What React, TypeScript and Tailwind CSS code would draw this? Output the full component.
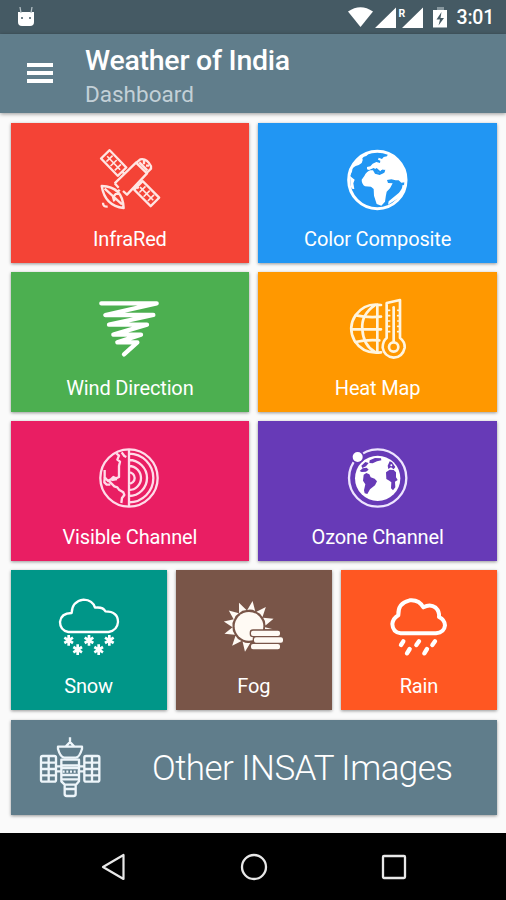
import type { ReactNode } from 'react';

interface TileProps {
  label: string;
  color: string;
  children: ReactNode;
}

export default function App() {
  return (
    <div className="w-full h-[900px] flex flex-col bg-[#fafafa] text-white font-[Roboto,sans-serif] overflow-hidden">
      <StatusBar />

      {/* Toolbar */}
      <header className="h-[79px] shrink-0 bg-[#607d8b] flex shadow-[0_1px_4px_rgba(0,0,0,0.4)]">
        <button className="w-[85px] pl-[27px] pt-[29px] flex flex-col gap-[4.5px]" aria-label="Menu">
          <span className="w-[26px] h-[3.5px] bg-white" />
          <span className="w-[26px] h-[3.5px] bg-white" />
          <span className="w-[26px] h-[3.5px] bg-white" />
        </button>
        <div className="pt-[10px]">
          <h1 className="text-[28.5px] leading-[34px] font-medium tracking-[-0.25px]">Weather of India</h1>
          <p className="text-[22.5px] leading-[32px] text-[#c3d0d7]">Dashboard</p>
        </div>
      </header>

      {/* Dashboard tiles */}
      <main className="flex-1 flex flex-col gap-[9px] pt-[10px] pl-[10.5px] pr-[9px]">
        <div className="grid grid-cols-2 gap-[9px]">
          <Tile label="InfraRed" color="bg-[#f44336]"><SatelliteIcon /></Tile>
          <Tile label="Color Composite" color="bg-[#2196f3]"><EarthIcon /></Tile>
          <Tile label="Wind Direction" color="bg-[#4caf50]"><TornadoIcon /></Tile>
          <Tile label="Heat Map" color="bg-[#ff9800]"><HeatIcon /></Tile>
          <Tile label="Visible Channel" color="bg-[#e91e63]"><CoreIcon /></Tile>
          <Tile label="Ozone Channel" color="bg-[#673ab7]"><OzoneIcon /></Tile>
        </div>
        <div className="grid grid-cols-3 gap-[9px] pb-[0.5px]">
          <Tile label="Snow" color="bg-[#009688]"><SnowIcon /></Tile>
          <Tile label="Fog" color="bg-[#795548]"><FogIcon /></Tile>
          <Tile label="Rain" color="bg-[#ff5722]"><RainIcon /></Tile>
        </div>
        <div className="h-[95px] flex items-center bg-[#607d8b] pl-[29.5px] shadow-[0_1px_3px_rgba(0,0,0,0.4)]">
          <InsatIcon />
          <span className="ml-[52px] pt-[4px] text-[35px] font-light tracking-[-0.55px] whitespace-nowrap">Other INSAT Images</span>
        </div>
      </main>

      <NavBar />
    </div>
  );
}

function Tile({ label, color, children }: TileProps) {
  return (
    <div className={`h-[140px] flex flex-col items-center pt-[27px] shadow-[0_1px_3px_rgba(0,0,0,0.4)] ${color}`}>
      {children}
      <span className="mt-[17px] text-[20px] leading-[24px] tracking-[-0.15px] whitespace-nowrap">{label}</span>
    </div>
  );
}

function StatusBar() {
  return (
    <div className="h-[34px] shrink-0 bg-[#455a64] flex items-center justify-between pl-[17px] pr-[12px]">
      <svg width="18" height="22" viewBox="0 0 18 22" fill="#fff">
        <path d="M1 6h16v10q0 4-4 4H5q-4 0-4-4z" />
        <path d="M4 7L3 1M14 7l1-6" stroke="#b4c0c5" strokeWidth="1.3" />
        <circle cx="5" cy="12" r="1" fill="#455a64" />
        <circle cx="13" cy="12" r="1" fill="#455a64" />
      </svg>
      <div className="flex items-center">
        <svg width="110" height="34" viewBox="347 0 110 34" fill="#fff">
          <path d="M348 11.5Q360.5 3 373 11.5L360.5 27z" />
          <path d="M396 7.5V28H375zM423 7.5V28H402z" />
          <text x="398.5" y="16.5" fontSize="10.5" fontWeight="700">R</text>
          <path d="M437 7h7v4h-7z" fill="#87979e" />
          <path d="M433 10h14v17.5h-14z" />
          <path d="M441.5 12l-5 7.5h3.5l-1.5 6 5.5-7.5h-3.5z" fill="#455a64" />
        </svg>
        <span className="pt-[2px] text-[19.5px] font-medium leading-none tracking-[-0.25px]">3:01</span>
      </div>
    </div>
  );
}

function NavBar() {
  return (
    <nav className="h-[67px] shrink-0 bg-black pl-[100px] pr-[98px] flex items-center justify-between">
      <svg width="28" height="30" viewBox="0 0 28 30" fill="none" stroke="#e8e8e8" strokeWidth="2.2" strokeLinejoin="round">
        <path d="M23.5 3v24L3 15z" />
      </svg>
      <svg width="30" height="30" viewBox="0 0 30 30" fill="none" stroke="#e8e8e8" strokeWidth="2.3">
        <circle cx="15" cy="15" r="12" />
      </svg>
      <svg width="28" height="30" viewBox="0 0 28 30" fill="none" stroke="#e8e8e8" strokeWidth="2.3">
        <rect x="3" y="4" width="22" height="22" rx="1" />
      </svg>
    </nav>
  );
}

function SatelliteIcon() {
  return (
    <svg className="overflow-visible" width="60" height="60" viewBox="30 30 180 180" fill="none" stroke="#ffe6e3" strokeWidth="7" strokeLinejoin="round">
      <g transform="translate(71 69) rotate(46)">
        <rect x="-36" y="-18" width="72" height="36" />
        <path d="M-28 0H28M-18-13V13M0-13V13M18-13V13" strokeWidth="5" />
      </g>
      <g transform="translate(170 161) rotate(45)">
        <rect x="-35" y="-18" width="70" height="36" />
        <path d="M-28 0H28M-18-13V13M0-13V13M18-13V13" strokeWidth="5" />
      </g>
      <path d="M74 130L138 68L171 100L111 164L99 153M74 130L86 143" />
      <path d="M138 69L151 58Q171 54 183 79L183 86L170 99M148 67L172 91M162 60V73M177 77H168" />
      <path d="M95 94L105 102M135 136L146 145" />
      <path d="M35 138Q98 140 101 204Q45 198 35 138zM44 146L96 193M89 149L69 171L73 184M80 158L91 164M39 188Q39 201 53 200" />
    </svg>
  );
}

function EarthIcon() {
  return (
    <svg className="overflow-visible" width="60" height="60" viewBox="31 30 180 180" fill="#fff">
      <circle cx="119" cy="120" r="86" fill="none" stroke="#fff" strokeWidth="9" />
      <path d="M35 110Q35 67 75 44L91 38Q93 44 86 48Q77 49 74 55Q78 61 72 69Q63 77 54 78L44 85Q45 94 40 101z" />
      <path d="M105 71L116 66L127 69L128 62L121 59L123 53L133 57L138 51L148 49L151 42L166 47Q204 71 206 117L202 127L191 128L183 121H174L161 118L148 120L151 129L165 130L157 145L147 155Q144 168 142 185L131 197L117 192L109 167L108 147L100 140L82 139Q72 132 72 119L80 108Q87 94 98 91L106 91L112 101L126 105L140 98L143 89L130 91L128 97L121 98L118 90L108 84L94 90L88 88V81L98 79z" />
      <path d="M111 88L117 84L128 94L136 88L141 94L132 101L122 98z" fill="#2196f3" />
      <path d="M37 108L51 119L47 130L50 147Q41 148 39 137zM184 158Q195 146 194 136L201 135Q200 159 184 173L151 194L153 184Z" />
    </svg>
  );
}

function TornadoIcon() {
  return (
    <svg className="overflow-visible" width="60" height="60" viewBox="30 27 180 180" fill="none" stroke="#fff" strokeWidth="13" strokeLinecap="round" strokeLinejoin="round">
      <path d="M34 40H200L46 75H190L57 104H171L70 134H153L82 157H142L102 193" />
    </svg>
  );
}

function HeatIcon() {
  return (
    <svg className="overflow-visible" width="60" height="60" viewBox="31 27 180 180" fill="none" stroke="#fff5df" strokeWidth="8" strokeLinejoin="round" strokeLinecap="round">
      <path d="M130 45Q83 37 54 75Q29 113 51 153Q78 194 130 187M119 44V187M111 46Q70 74 74 118Q77 166 112 186" />
      <path d="M42 118H130M55 76Q90 84 130 80M53 156Q87 148 125 151" />
      <path d="M147 144V39L187 30V144Q202 155 201 173Q195 201 168 203Q139 199 135 173Q135 153 147 144z" />
      <circle cx="168" cy="171" r="14" />
      <path d="M168 52V153" />
      <path d="M149 61H156M149 77H156M149 93H156M149 109H156M149 125H156M180 61H187M180 77H187M180 93H187M180 109H187M180 125H187" strokeWidth="5" />
    </svg>
  );
}

function CoreIcon() {
  return (
    <svg className="overflow-visible" width="60" height="60" viewBox="31 30 180 180" fill="none" stroke="#ffdce9" strokeWidth="7" strokeLinejoin="round">
      <circle cx="118" cy="120" r="86" />
      <path d="M118 35V205M118 47A73 73 0 0 1 118 193M118 66A54 54 0 0 1 118 174M118 84A36 36 0 0 1 118 156M118 103A17 17 0 0 1 118 137" />
      <path d="M80 46L88 53L83 65L91 71L88 84V117L79 121L71 117L64 124L55 129L45 118V96M96 43L104 54L110 57M45 119L44 133L51 140L62 140M65 126L82 123M58 129L74 145L83 148L88 155L101 163L104 171L97 180L95 195" />
    </svg>
  );
}

function OzoneIcon() {
  return (
    <svg className="overflow-visible" width="60" height="60" viewBox="32 30 180 180" fill="#fff">
      <circle cx="121" cy="120" r="86" fill="none" stroke="#eee5ff" strokeWidth="7" />
      <circle cx="121" cy="121" r="68" />
      <g fill="#673ab7">
        <circle cx="61" cy="57" r="20" />
        <path d="M79 110L87 105L96 109L100 118L112 122L119 130L113 142L98 154L90 168L82 166L80 157L84 139L77 128z" />
        <path d="M146 103L157 95L169 96L176 103V118L181 126L173 131L174 148L167 157L161 151L162 133L156 128L147 123z" />
        <path d="M72 83L84 72L94 75L86 85L75 90zM97 67L113 60L131 61L132 67L119 70L106 76L96 75zM67 99L76 91L88 89L94 95L86 101L73 102z" />
        <path d="M151 83L157 70L164 73L174 87L169 94L161 88L153 93z" />
      </g>
      <circle cx="61" cy="57" r="15" />
      <circle cx="162" cy="82" r="3" />
    </svg>
  );
}

function SnowIcon() {
  const flakes = [[85, 181], [146, 181], [207, 181], [112, 209], [175, 209]];

  return (
    <svg className="overflow-visible" width="60" height="60" viewBox="56 51 180 180" fill="none" stroke="#fff" strokeWidth="7" strokeLinejoin="round">
      <path d="M84 156Q59 151 59 126Q62 99 94 99Q95 64 130 59Q157 60 164 83Q188 80 195 94Q233 94 233 126Q231 151 205 156z" />
      {flakes.map(([x, y]) => (
        <path key={`${x}-${y}`} d="M0-16V16M-13-8L13 8M-13 8L13-8" strokeWidth="8" transform={`translate(${x} ${y})`} />
      ))}
    </svg>
  );
}

function FogIcon() {
  const rays = [8, 41, 73, 189, 221, 253, 281, 308, 337];

  return (
    <svg className="overflow-visible" width="60" height="60" viewBox="553 51 180 180" fill="#fffaf4">
      {rays.map((angle) => (
        <path key={angle} d="M-12-48Q0-53 12-48L0-77z" transform={`translate(628 139) rotate(${angle})`} />
      ))}
      <circle cx="628" cy="139" r="43" />
      <path d="M676 142L700 148H676z" />
      <g stroke="#795548" strokeWidth="4">
        <rect x="632" y="150" width="91" height="20" rx="8" />
        <rect x="632" y="190" width="91" height="20" rx="8" />
        <rect x="641" y="170" width="91" height="20" rx="8" />
      </g>
    </svg>
  );
}

function RainIcon() {
  return (
    <svg className="overflow-visible" width="60" height="60" viewBox="27 51 180 180" fill="none" stroke="#fff" strokeWidth="12" strokeLinejoin="round" strokeLinecap="round">
      <path d="M62 160Q38 157 37 132Q39 115 55 106Q53 69 89 61Q117 58 130 82Q151 70 167 83Q179 94 177 111Q194 119 195 136Q193 157 168 160z" />
      <path d="M70 184L63 195M117 184L109 195M165 184L157 195M89 207L81 220M141 207L133 220" strokeWidth="13" />
    </svg>
  );
}

function InsatIcon() {
  return (
    <svg className="overflow-visible" width="60" height="60" viewBox="30 27 180 180" fill="none" stroke="#edf5fa" strokeWidth="7" strokeLinejoin="round">
      <path d="M120 28V42L107 56M120 42L133 56M84 56H156V63Q148 89 137 89H103Q91 88 84 63z" />
      <rect x="33" y="84" width="45" height="77" rx="5" />
      <rect x="163" y="84" width="45" height="77" rx="5" />
      <path d="M56 84V161M34 104H78M34 123H78M34 142H78M186 84V161M163 104H208M163 123H208M163 142H208" />
      <path d="M94 95H147V160L138 170H104L94 160zM94 112H147M94 120H147M94 141H147M94 154H147M79 115H94M79 130H94M147 115H163M147 130H163M104 170V198Q104 204 110 204H131Q137 204 137 198V170M104 183H137" />
      <path d="M98 131H143" strokeDasharray="6 5" />
    </svg>
  );
}
